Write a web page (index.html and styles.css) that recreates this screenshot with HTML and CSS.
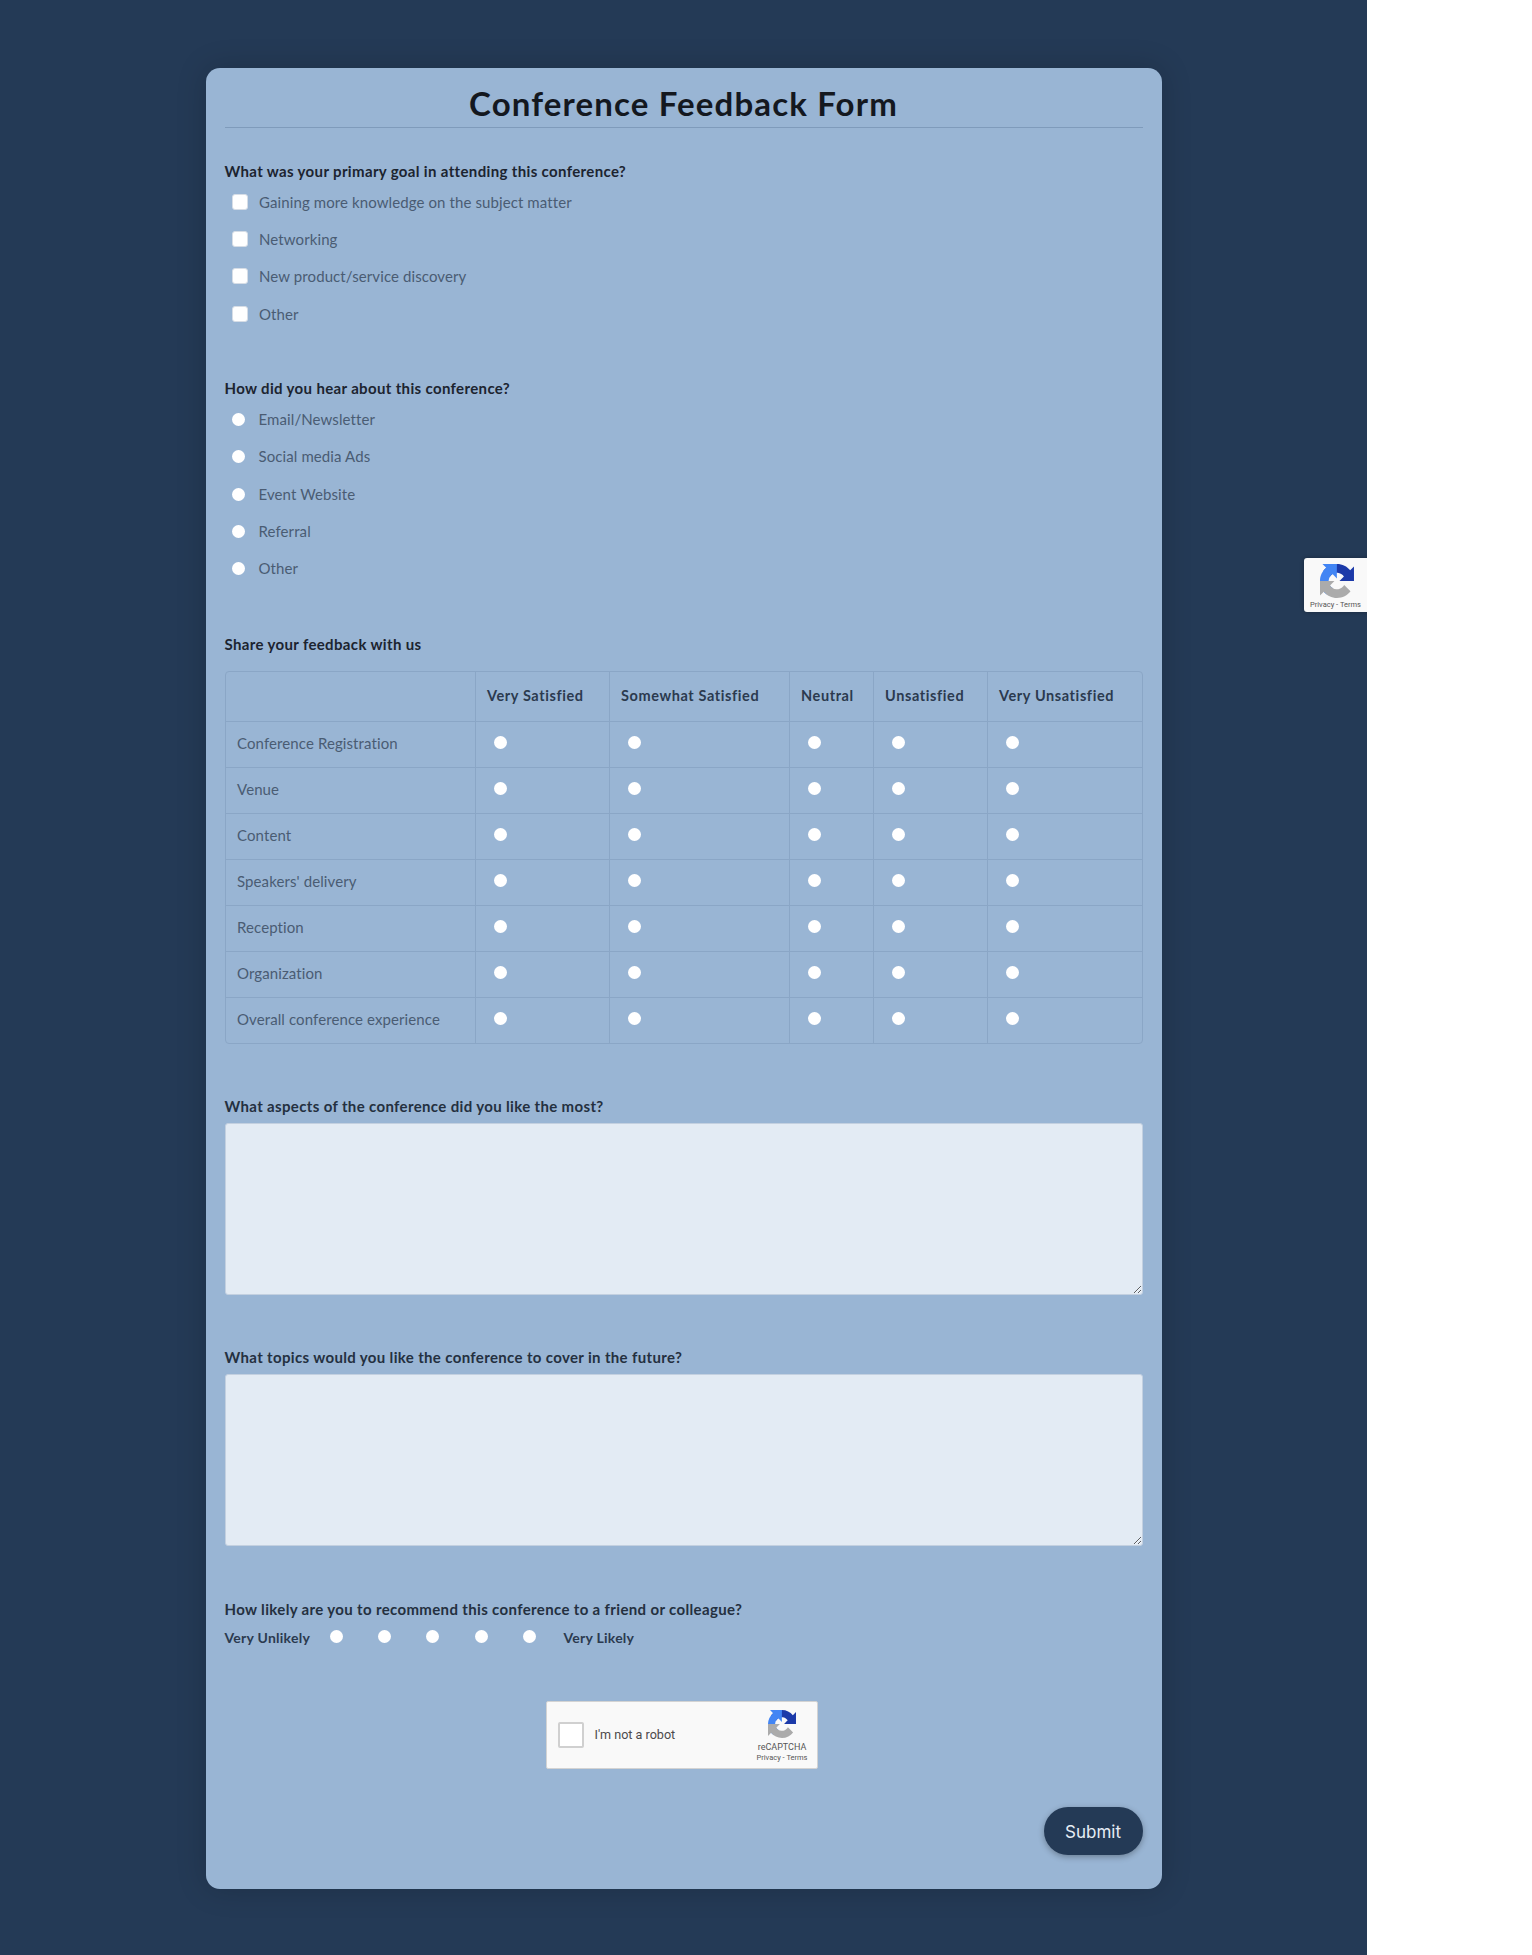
FILE: index.html
```html
<!DOCTYPE html>
<html lang="en">
<head>
  <meta charset="UTF-8" />
  <meta name="viewport" content="width=device-width, initial-scale=1" />
  <title>Conference Feedback Form</title>
  <link rel="stylesheet" href="styles.css">
</head>
<body>
  <svg class="defs" width="0" height="0">
    <symbol id="recaptcha-logo" viewBox="0 0 64 64">
      <path d="M64 31.955l-.033-1.37V4.687l-7.16 7.16C50.948 4.674 42.033.093 32.05.093c-10.4 0-19.622 4.96-25.458 12.64l11.736 11.86a15.55 15.55 0 0 1 4.754-5.334c2.05-1.6 4.952-2.906 8.968-2.906.485 0 .86.057 1.135.163 4.976.393 9.288 3.14 11.828 7.124l-8.307 8.307c10.52-.04 22.4-.066 27.295.005" fill="#1c3aa9"/>
      <path d="M31.862.002l-1.37.033H4.594l7.16 7.16C4.58 13.054 0 21.97 0 31.953c0 10.4 4.96 19.622 12.64 25.458l11.86-11.736a15.55 15.55 0 0 1-5.334-4.754c-1.6-2.05-2.906-4.952-2.906-8.968 0-.485.057-.86.163-1.135.393-4.976 3.14-9.288 7.124-11.828l8.307 8.307c-.04-10.52-.066-22.4.005-27.295" fill="#4285f4"/>
      <path d="M.001 31.953l.033 1.37v25.898l7.16-7.16c5.86 7.173 14.774 11.754 24.76 11.754 10.4 0 19.622-4.96 25.458-12.64l-11.86-11.736a15.55 15.55 0 0 1-4.754 5.334c-2.05 1.6-4.952 2.906-8.968 2.906-.485 0-.86-.057-1.135-.163-4.976-.393-9.288-3.14-11.828-7.124l8.307-8.307c-10.52.04-22.4.066-27.295-.005" fill="#ababab"/>
    </symbol>
  </svg>

  <div class="page">
    <form class="card">
      <h1 class="title">Conference Feedback Form</h1>

      <div class="question q-goal">What was your primary goal in attending this conference?</div>
      <label class="option"><input type="checkbox" /><span>Gaining more knowledge on the subject matter</span></label>
      <label class="option"><input type="checkbox" /><span>Networking</span></label>
      <label class="option"><input type="checkbox" /><span>New product/service discovery</span></label>
      <label class="option"><input type="checkbox" /><span>Other</span></label>

      <div class="question q-hear">How did you hear about this conference?</div>
      <label class="option"><input type="radio" name="hear" /><span>Email/Newsletter</span></label>
      <label class="option"><input type="radio" name="hear" /><span>Social media Ads</span></label>
      <label class="option"><input type="radio" name="hear" /><span>Event Website</span></label>
      <label class="option"><input type="radio" name="hear" /><span>Referral</span></label>
      <label class="option"><input type="radio" name="hear" /><span>Other</span></label>

      <div class="question q-share">Share your feedback with us</div>
      <table class="grid">
        <thead>
          <tr>
            <th></th>
            <th>Very Satisfied</th>
            <th>Somewhat Satisfied</th>
            <th>Neutral</th>
            <th>Unsatisfied</th>
            <th>Very Unsatisfied</th>
          </tr>
        </thead>
        <tbody>
          <tr><td>Conference Registration</td><td><input type="radio" name="r1" /></td><td><input type="radio" name="r1" /></td><td><input type="radio" name="r1" /></td><td><input type="radio" name="r1" /></td><td><input type="radio" name="r1" /></td></tr>
          <tr><td>Venue</td><td><input type="radio" name="r2" /></td><td><input type="radio" name="r2" /></td><td><input type="radio" name="r2" /></td><td><input type="radio" name="r2" /></td><td><input type="radio" name="r2" /></td></tr>
          <tr><td>Content</td><td><input type="radio" name="r3" /></td><td><input type="radio" name="r3" /></td><td><input type="radio" name="r3" /></td><td><input type="radio" name="r3" /></td><td><input type="radio" name="r3" /></td></tr>
          <tr><td>Speakers' delivery</td><td><input type="radio" name="r4" /></td><td><input type="radio" name="r4" /></td><td><input type="radio" name="r4" /></td><td><input type="radio" name="r4" /></td><td><input type="radio" name="r4" /></td></tr>
          <tr><td>Reception</td><td><input type="radio" name="r5" /></td><td><input type="radio" name="r5" /></td><td><input type="radio" name="r5" /></td><td><input type="radio" name="r5" /></td><td><input type="radio" name="r5" /></td></tr>
          <tr><td>Organization</td><td><input type="radio" name="r6" /></td><td><input type="radio" name="r6" /></td><td><input type="radio" name="r6" /></td><td><input type="radio" name="r6" /></td><td><input type="radio" name="r6" /></td></tr>
          <tr><td>Overall conference experience</td><td><input type="radio" name="r7" /></td><td><input type="radio" name="r7" /></td><td><input type="radio" name="r7" /></td><td><input type="radio" name="r7" /></td><td><input type="radio" name="r7" /></td></tr>
        </tbody>
      </table>

      <div class="question q-text">What aspects of the conference did you like the most?</div>
      <textarea class="answer"></textarea>

      <div class="question q-text">What topics would you like the conference to cover in the future?</div>
      <textarea class="answer"></textarea>

      <div class="question q-text q-scale">How likely are you to recommend this conference to a friend or colleague?</div>
      <div class="scale">
        <span class="scale-label low">Very Unlikely</span>
        <input type="radio" name="nps" />
        <input type="radio" name="nps" />
        <input type="radio" name="nps" />
        <input type="radio" name="nps" />
        <input type="radio" name="nps" />
        <span class="scale-label high">Very Likely</span>
      </div>

      <div class="captcha">
        <span class="captcha-box"></span>
        <span class="captcha-text">I'm not a robot</span>
        <div class="captcha-brand">
          <svg class="captcha-logo"><use href="#recaptcha-logo"></use></svg>
          <div class="captcha-name">reCAPTCHA</div>
          <div class="captcha-links">Privacy - Terms</div>
        </div>
      </div>

      <div class="actions">
        <button class="submit" type="button">Submit</button>
      </div>
    </form>

    <div class="badge">
      <svg class="badge-logo"><use href="#recaptcha-logo"></use></svg>
      <div class="badge-links">Privacy - Terms</div>
    </div>
  </div>
</body>
</html>
```

FILE: styles.css
```css
/* Page */
body {
  margin: 0;
  background: #fff;
  font-family: Lato, "Open Sans", sans-serif;
}
.defs {
  position: absolute;
}
.page {
  position: relative;
  width: 1367px;
  height: 1955px;
  padding-top: 68px;
  box-sizing: border-box;
  background: #243a56;
  overflow: hidden;
}

/* Card */
.card {
  width: 956px;
  height: 1821px;
  margin: 0 auto;
  padding: 15px 19px 0;
  box-sizing: border-box;
  background: #99b5d4;
  border-radius: 14px;
  box-shadow: 0 0 30px rgba(0, 0, 0, 0.18);
}
.title {
  margin: 0;
  height: 43.5px;
  border-bottom: 1px solid #7f9bbb;
  font-size: 33px;
  line-height: 40px;
  font-weight: 700;
  letter-spacing: 1.15px;
  text-align: center;
  color: #14181f;
}

/* Questions */
.question {
  font-size: 15px;
  line-height: 20px;
  font-weight: 700;
  letter-spacing: 0.35px;
  color: #1c2430;
}
.q-goal {
  margin-top: 33.5px;
  margin-bottom: 2px;
}
.q-hear {
  margin-top: 45.5px;
  margin-bottom: 2px;
}
.q-share {
  margin-top: 47px;
  margin-bottom: 17px;
}
.q-text {
  margin-top: 52px;
  margin-bottom: 7px;
  color: #243040;
}
.q-scale {
  margin-top: 53px;
  margin-bottom: 0;
}

/* Options */
.option {
  display: flex;
  align-items: center;
  height: 37.4px;
  padding-left: 7px;
  font-size: 15px;
  letter-spacing: 0.1px;
  color: #4a5c73;
}
.option input {
  margin: 0 11.5px 0 0;
  flex: none;
}
.option input[type="radio"] {
  margin: 1px 13.5px 0 0.5px;
}

input[type="checkbox"] {
  appearance: none;
  width: 16px;
  height: 16px;
  background: #fff;
  border: 1px solid #d6dde6;
  border-radius: 3px;
  box-sizing: border-box;
}
input[type="radio"] {
  appearance: none;
  width: 13px;
  height: 13px;
  margin: 0;
  background: #fff;
  border-radius: 50%;
}

/* Satisfaction table */
.grid {
  width: 100%;
  table-layout: fixed;
  border-collapse: separate;
  border-spacing: 0;
  border: 1px solid #8aa6c6;
  border-radius: 4px;
}
.grid th,
.grid td {
  box-sizing: border-box;
  padding: 0 11.5px;
  text-align: left;
  border-left: 1px solid #8aa6c6;
  border-top: 1px solid #8aa6c6;
}
.grid th:first-child,
.grid td:first-child {
  border-left: none;
}
.grid th:nth-child(1) { width: 249px; }
.grid th:nth-child(2) { width: 134px; }
.grid th:nth-child(3) { width: 180px; }
.grid th:nth-child(4) { width: 84px; }
.grid th:nth-child(5) { width: 114px; }
.grid thead th {
  height: 49px;
  padding-bottom: 2px;
  border-top: none;
  font-size: 14.5px;
  font-weight: 700;
  letter-spacing: 0.6px;
  color: #2b3a4f;
}
.grid tbody td {
  height: 46px;
  padding-bottom: 4px;
  font-size: 15px;
  letter-spacing: 0.1px;
  color: #4a5c73;
}
.grid tbody td input {
  display: block;
  margin-top: -1px;
  margin-left: 7px;
}

/* Free text */
.answer {
  display: block;
  width: 100%;
  height: 172px;
  box-sizing: border-box;
  background: #e3ebf4;
  border: 1px solid #c3d0e0;
  border-radius: 3px;
  outline: none;
}

/* Recommend scale */
.scale {
  display: flex;
  align-items: center;
  height: 20px;
  margin-top: 8px;
  font-size: 14px;
  font-weight: 700;
  letter-spacing: 0.25px;
  color: #2b3a4f;
}
.scale input {
  flex: none;
  margin-top: -2px;
  margin-right: 35.4px;
}
.scale-label.low {
  width: 105px;
}
.scale-label.high {
  margin-left: -8px;
}

/* Captcha */
.captcha {
  display: flex;
  align-items: center;
  width: 272px;
  height: 68px;
  margin: 53.7px 0 0 321.5px;
  padding-left: 10.5px;
  box-sizing: border-box;
  background: #f9f9f9;
  border: 1px solid #d3d3d3;
  border-radius: 2px;
  font-family: Roboto, sans-serif;
  color: #4c4a4b;
}
.captcha-box {
  flex: none;
  width: 26px;
  height: 26px;
  box-sizing: border-box;
  background: #fff;
  border: 2px solid #d0d0d0;
  border-radius: 2px;
}
.captcha-text {
  margin-left: 11px;
  font-size: 12.6px;
}
.captcha-brand {
  margin-left: auto;
  margin-right: 5px;
  margin-top: 4px;
  width: 60px;
  text-align: center;
}
.captcha-logo {
  display: block;
  width: 28px;
  height: 28px;
  margin: 0 auto 4px;
}
.captcha-name {
  font-size: 9px;
  line-height: 11px;
  color: #555;
}
.captcha-links {
  font-size: 7.5px;
  line-height: 10px;
  color: #555;
}

/* Submit */
.actions {
  display: flex;
  justify-content: flex-end;
  margin-top: 38px;
}
.submit {
  width: 99px;
  height: 48px;
  padding-top: 3px;
  background: #243a56;
  border: none;
  border-radius: 24px;
  box-shadow: 0 2px 6px rgba(0, 0, 0, 0.3);
  font-family: Inter, Roboto, sans-serif;
  font-size: 17px;
  font-weight: 400;
  color: #e6edf5;
}

/* Floating recaptcha badge, clipped by the page edge */
.badge {
  position: absolute;
  left: 1304px;
  top: 558px;
  width: 72px;
  height: 54px;
  background: #f9f9f9;
  border-radius: 3px;
  box-shadow: 0 0 4px rgba(0, 0, 0, 0.3);
  font-family: Roboto, sans-serif;
}
.badge-logo {
  display: block;
  width: 34px;
  height: 34px;
  margin: 6px 0 0 16px;
}
.badge-links {
  margin: 2px 0 0 6px;
  font-size: 7.5px;
  line-height: 10px;
  color: #555;
}
```
